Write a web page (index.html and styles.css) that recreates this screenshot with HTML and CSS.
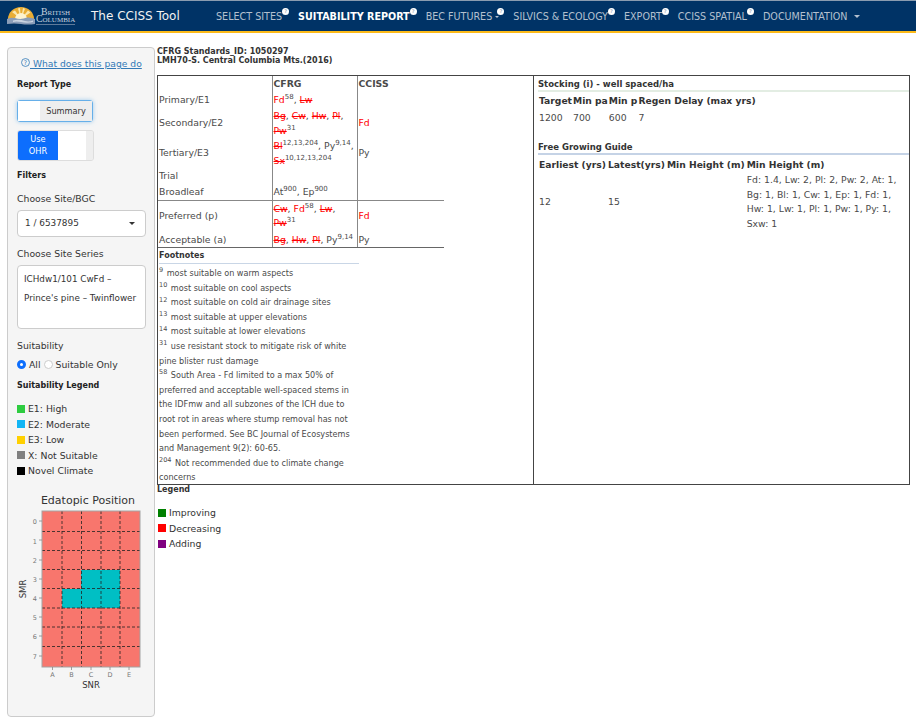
FILE: index.html
```html
<!DOCTYPE html>
<html lang="en">
<head>
    <meta charset="UTF-8">
    <meta name="viewport" content="width=device-width, initial-scale=1.0">
    <title>The CCISS Tool</title>
    <link rel="stylesheet" href="styles.css">
</head>
<body>
    <div class="navbar">
        <div class="brand">
            <svg class="logo-sun" width="28" height="18" viewBox="0 0 28 18">
                <path d="M1 12 A13 12 0 0 1 27 12 Z" fill="#e9ad35"/>
                <path d="M14 12 L5 5 L8 3.500 Z M14 12 L11 1.500 L13 1 Z M14 12 L16 1 L18 1.800 Z M14 12 L21 3.500 L23.500 5.500 Z" fill="#fbe7ac"/>
                <path d="M8 12 A6 6 0 0 1 20 12 Z" fill="#fdf3d0"/>
                <path d="M0 12 Q4 10 8 11 Q14 13 20 10.500 Q24 10 28 12 V17 Q21 18 14 17 T0 17 Z" fill="#8a9db8"/>
                <path d="M6 13.500 Q12 12 18 14 Q22 15 26 13.500 V15 Q20 16.500 14 15 Q9 14 6 15 Z" fill="#c9d3e0"/>
            </svg>
            <div class="logo-text"><span>British</span><span class="logo-col">Columbia</span></div>
        </div>
        <div class="app-title">The CCISS Tool</div>
        <ul class="nav-links">
            <li>SELECT SITES<i class="dot">?</i></li>
            <li class="active">SUITABILITY REPORT<i class="dot">?</i></li>
            <li class="has-small-caret">BEC FUTURES <b class="caret small"></b><i class="dot">?</i></li>
            <li>SILVICS &amp; ECOLOGY<i class="dot">?</i></li>
            <li>EXPORT<i class="dot">?</i></li>
            <li>CCISS SPATIAL<i class="dot">?</i></li>
            <li>DOCUMENTATION <b class="caret"></b></li>
        </ul>
    </div>

    <div class="page">
        <div class="sidebar">
            <a class="help-link" href="#"><svg width="9" height="9" viewBox="0 0 10 10"><circle cx="5" cy="5" r="4.400" fill="none" stroke="#337ab7" stroke-width="0.900"/><text x="5" y="7.500" text-anchor="middle" class="help-q">?</text></svg> What does this page do</a>
            <h5>Report Type</h5>
            <div class="toggle toggle-summary"><span class="toggle-blank"></span><span class="toggle-label">Summary</span></div>
            <div class="toggle toggle-ohr"><span class="toggle-on">Use OHR</span><span class="toggle-blank"></span><span class="toggle-end"></span></div>
            <h5 class="filters">Filters</h5>
            <label class="field-label">Choose Site/BGC</label>
            <div class="select-box">1 / 6537895<b class="caret dark"></b></div>
            <label class="field-label">Choose Site Series</label>
            <div class="series-box">ICHdw1/101 CwFd –<br>Prince's pine – Twinflower</div>
            <label class="field-label">Suitability</label>
            <div class="radios">
                <span class="radio checked"></span><span>All</span>
                <span class="radio"></span><span>Suitable Only</span>
            </div>
            <h5 class="legend-head">Suitability Legend</h5>
            <div class="legend-row"><span class="swatch" style="background:#2ecc40"></span>E1: High</div>
            <div class="legend-row"><span class="swatch" style="background:#12b5f5"></span>E2: Moderate</div>
            <div class="legend-row"><span class="swatch" style="background:#ffd000"></span>E3: Low</div>
            <div class="legend-row"><span class="swatch" style="background:#808080"></span>X: Not Suitable</div>
            <div class="legend-row"><span class="swatch" style="background:#000000"></span>Novel Climate</div>

            <svg class="edatopic" width="148" height="200" viewBox="1 0 148 200">
                <text x="81" y="11" class="plot-title" text-anchor="middle">Edatopic Position</text>
                <rect x="35" y="18" width="98" height="156" fill="#f8766d"/>
                <path d="M74 77 H113 V115 H55 V96 H74 Z" fill="#00bfc4"/>
                <path d="M55 18V174M74.500 18V174M94 18V174M113 18V174M35 38.500H133M35 57.500H133M35 76.500H133M35 95.500H133M35 115H133M35 134H133M35 153.500H133" stroke="#222" stroke-width="0.800" stroke-dasharray="3 2" fill="none"/>
                <rect x="35" y="18" width="98" height="156" fill="none" stroke="#a3a3a3" stroke-width="1"/>
                <path d="M32 28H35M32 47H35M32 67H35M32 86H35M32 105H35M32 124H35M32 143H35M32 163H35M45.500 174V177M64.500 174V177M84 174V177M103 174V177M122 174V177" stroke="#888" stroke-width="0.800"/>
                <g class="tick" text-anchor="end">
                    <text x="30" y="31">0</text><text x="30" y="51">1</text><text x="30" y="70">2</text><text x="30" y="89">3</text>
                    <text x="30" y="108">4</text><text x="30" y="127">5</text><text x="30" y="146">6</text><text x="30" y="166">7</text>
                </g>
                <g class="tick" text-anchor="middle">
                    <text x="45.500" y="184">A</text><text x="64.500" y="184">B</text><text x="84" y="184">C</text><text x="103" y="184">D</text><text x="122" y="184">E</text>
                </g>
                <text x="84" y="195" class="axis-name" text-anchor="middle">SNR</text>
                <text class="axis-name" text-anchor="middle" transform="translate(19 96) rotate(-90)">SMR</text>
            </svg>
        </div>

        <div class="main">
            <div class="report-title">CFRG Standards_ID: 1050297<br>LMH70-S. Central Columbia Mts.(2016)</div>
            <div class="report">
                <div class="report-left">
                    <table class="cfrg">
                        <tr class="row-head"><td></td><th>CFRG</th><th>CCISS</th></tr>
                        <tr class="row-primary"><td>Primary/E1</td><td><span class="red">Fd</span><sup>58</sup>, <s>Lw</s></td><td></td></tr>
                        <tr class="row-secondary"><td>Secondary/E2</td><td><s>Bg</s>, <s>Cw</s>, <s>Hw</s>, <s>Pl</s>, <s>Pw</s><sup>31</sup></td><td class="red">Fd</td></tr>
                        <tr class="row-tertiary"><td>Tertiary/E3</td><td><s>Bl</s><sup>12,13,204</sup>, Py<sup>9,14</sup>, <s>Sx</s><sup>10,12,13,204</sup></td><td>Py</td></tr>
                        <tr class="row-trial"><td>Trial</td><td></td><td></td></tr>
                        <tr class="row-broadleaf"><td>Broadleaf</td><td>At<sup>900</sup>, Ep<sup>900</sup></td><td></td></tr>
                        <tr class="row-preferred rule-top"><td>Preferred (p)</td><td><s>Cw</s>, <span class="red">Fd</span><sup>58</sup>, <s>Lw</s>, <s>Pw</s><sup>31</sup></td><td class="red">Fd</td></tr>
                        <tr class="row-accept rule-bottom"><td>Acceptable (a)</td><td class="nowrap"><s>Bg</s>, <s>Hw</s>, <s>Pl</s>, Py<sup>9,14</sup></td><td>Py</td></tr>
                    </table>
                    <div class="notes">
                        <h6 class="notes-head">Footnotes</h6>
                        <p><sup>9</sup> most suitable on warm aspects</p>
                        <p><sup>10</sup> most suitable on cool aspects</p>
                        <p><sup>12</sup> most suitable on cold air drainage sites</p>
                        <p><sup>13</sup> most suitable at upper elevations</p>
                        <p><sup>14</sup> most suitable at lower elevations</p>
                        <p><sup>31</sup> use resistant stock to mitigate risk of white pine blister rust damage</p>
                        <p><sup>58</sup> South Area - Fd limited to a max 50% of preferred and acceptable well-spaced stems in the IDFmw and all subzones of the ICH due to root rot in areas where stump removal has not been performed. See BC Journal of Ecosystems and Management 9(2): 60-65.</p>
                        <p><sup>204</sup> Not recommended due to climate change concerns</p>
                    </div>
                </div>
                <div class="report-right">
                    <h6 class="section-head green-rule">Stocking (i) - well spaced/ha</h6>
                    <table class="data stocking">
                        <tr><th>Target</th><th>Min pa</th><th>Min p</th><th>Regen Delay (max yrs)</th></tr>
                        <tr><td>1200</td><td>700</td><td>600</td><td>7</td></tr>
                    </table>
                    <h6 class="section-head blue-rule">Free Growing Guide</h6>
                    <table class="data growing">
                        <tr><th>Earliest (yrs)</th><th>Latest(yrs)</th><th>Min Height (m)</th><th>Min Height (m)</th></tr>
                        <tr><td>12</td><td>15</td><td></td><td class="heights">Fd: 1.4, Lw: 2, Pl: 2, Pw: 2, At: 1, Bg: 1, Bl: 1, Cw: 1, Ep: 1, Fd: 1, Hw: 1, Lw: 1, Pl: 1, Pw: 1, Py: 1, Sxw: 1</td></tr>
                    </table>
                </div>
            </div>
            <h6 class="legend-title">Legend</h6>
            <div class="change-legend">
                <div class="legend-row"><span class="swatch" style="background:#008000"></span>Improving</div>
                <div class="legend-row"><span class="swatch" style="background:#ff0000"></span>Decreasing</div>
                <div class="legend-row"><span class="swatch" style="background:#800080"></span>Adding</div>
            </div>
        </div>
    </div>
</body>
</html>
```

FILE: styles.css
```css
* {
    box-sizing: border-box;
}

body {
    font-family: "DejaVu Sans", Verdana, sans-serif;
    font-size: 9.300px;
    color: #4a4a4a;
    background-color: #ffffff;
    margin: 0;
    height: 720px;
    overflow: hidden;
}

.navbar {
    height: 33px;
    background-color: #003366;
    border-top: 1px solid #8a9cb0;
    border-bottom: 2px solid #fcba19;
    display: flex;
    align-items: center;
    color: #ffffff;
}

.brand {
    display: flex;
    align-items: center;
    width: 91px;
    padding-left: 7px;
    gap: 1px;
}

.logo-text {
    display: flex;
    flex-direction: column;
    align-items: center;
    font-family: "Liberation Serif", serif;
    font-size: 9.800px;
    line-height: 7.500px;
    font-variant: small-caps;
    color: #c8d2de;
    white-space: nowrap;
}

.logo-col {
    border-bottom: 1px solid #5f7a9a;
    padding-bottom: 1px;
}

.app-title {
    font-size: 12px;
    color: #f2f2f2;
    width: 125px;
}

.nav-links {
    list-style: none;
    margin: 0;
    padding: 0;
    display: flex;
    gap: 13px;
    font-size: 9.600px;
    color: #b4c0cf;
}

.nav-links li {
    position: relative;
    white-space: nowrap;
    padding-right: 3px;
}

.nav-links li.active {
    color: #ffffff;
    font-weight: bold;
}

.nav-links li.has-small-caret {
    padding-right: 1px;
}

.dot {
    position: absolute;
    top: -3px;
    right: -4px;
    width: 7px;
    height: 7px;
    border-radius: 50%;
    background-color: #ffffff;
    color: #a9b6c6;
    font-size: 5px;
    line-height: 7px;
    font-style: normal;
    font-weight: bold;
    text-align: center;
}

.caret {
    display: inline-block;
    width: 0;
    height: 0;
    margin-left: 3px;
    vertical-align: middle;
    border-top: 3px solid #b4c0cf;
    border-left: 3px solid transparent;
    border-right: 3px solid transparent;
}

.caret.small {
    margin-left: 0;
    border-top-width: 2px;
    border-left-width: 2px;
    border-right-width: 2px;
}

.caret.dark {
    border-top-color: #333;
}

.page {
    display: flex;
    align-items: flex-start;
    padding: 14px 7px 0;
    gap: 2px;
}

.sidebar {
    width: 148px;
    height: 670px;
    flex-shrink: 0;
    background-color: #f5f5f5;
    border: 1px solid #cccccc;
    border-radius: 4px;
    padding: 10px 0 0 9px;
    color: #333333;
}

.help-link {
    display: block;
    margin-left: 4px;
    color: #337ab7;
    font-size: 9.200px;
    text-decoration: underline;
    white-space: nowrap;
    line-height: 12px;
}

.help-q {
    font-size: 7px;
    fill: #337ab7;
}

h5 {
    margin: 10px 0 0;
    font-size: 8px;
    line-height: 10px;
    font-weight: bold;
    color: #222222;
}

.toggle {
    display: flex;
    border-radius: 3px;
    overflow: hidden;
    font-size: 8.200px;
}

.toggle-summary {
    width: 76px;
    height: 22px;
    margin-top: 10px;
    border: 1px solid #66afe9;
    box-shadow: 0 0 4px rgba(102, 175, 233, 0.6);
    overflow: visible;
}

.toggle-blank {
    width: 22px;
    background-color: #ffffff;
}

.toggle-label {
    flex: 1;
    background-color: #eeeeee;
    text-align: center;
    line-height: 20px;
}

.toggle-ohr {
    width: 77px;
    height: 31px;
    margin-top: 8px;
    border: 1px solid #dddddd;
}

.toggle-on {
    width: 40px;
    background-color: #0d6efd;
    color: #ffffff;
    text-align: center;
    padding: 3px 8px;
    line-height: 11.500px;
}

.toggle-ohr .toggle-blank {
    width: 28px;
}

.toggle-end {
    flex: 1;
    background-color: #eeeeee;
}

.filters {
    margin-top: 10px;
}

.field-label {
    display: block;
    line-height: 13px;
    margin-top: 11px;
}

.select-box {
    position: relative;
    width: 129px;
    height: 27px;
    margin-top: 5px;
    background-color: #ffffff;
    border: 1px solid #cccccc;
    border-radius: 4px;
    font-size: 8.900px;
    line-height: 25px;
    padding-left: 7px;
}

.select-box .caret {
    position: absolute;
    right: 10px;
    top: 11px;
}

.select-box + .field-label {
    margin-top: 10px;
}

.series-box {
    width: 129px;
    height: 64px;
    margin-top: 5px;
    background-color: #ffffff;
    border: 1px solid #cccccc;
    border-radius: 4px;
    font-size: 8.800px;
    line-height: 18.500px;
    padding: 4px 6px;
    white-space: nowrap;
    overflow: hidden;
}

.series-box + .field-label {
    margin-top: 10px;
}

.radios {
    display: flex;
    align-items: center;
    gap: 3px;
    margin-top: 6px;
    line-height: 13px;
}

.radio {
    width: 9px;
    height: 9px;
    border-radius: 50%;
    background-color: #ffffff;
    border: 1px solid #cccccc;
}

.radio.checked {
    border: 3px solid #0d6efd;
}

.legend-head {
    margin-top: 10px;
    margin-bottom: 10px;
}

.legend-row {
    display: flex;
    align-items: center;
    gap: 3px;
    height: 15.500px;
    color: #333333;
}

.swatch {
    width: 8px;
    height: 8px;
    flex-shrink: 0;
}

.edatopic {
    display: block;
    margin: 14px 0 0 -9px;
}

.plot-title {
    font-size: 11px;
    fill: #333333;
}

.tick text {
    font-size: 6.500px;
    fill: #777777;
}

.axis-name {
    font-size: 8.500px;
    fill: #333333;
}

.main {
    flex: 1;
    min-width: 0;
}

.report-title {
    margin-top: 1px;
    font-size: 8px;
    line-height: 8.500px;
    font-weight: bold;
    color: #333333;
}

.report {
    display: flex;
    width: 753px;
    height: 410px;
    margin-top: 10px;
    border: 1px solid #444444;
}

.report-left {
    width: 376px;
    border-right: 1px solid #444444;
}

table {
    border-collapse: collapse;
}

.cfrg {
    table-layout: fixed;
    width: 286px;
}

.cfrg td,
.cfrg th {
    padding: 0 0 0 1px;
    line-height: 14.500px;
    text-align: left;
    font-weight: normal;
}

.cfrg th {
    font-weight: bold;
    vertical-align: top;
    padding-top: 1px;
}

.cfrg td:first-child {
    width: 114px;
}

.cfrg td:nth-child(2),
.cfrg th:nth-child(2) {
    width: 85px;
    border-left: 1px solid #888888;
    border-right: 1px solid #888888;
}

.row-head {
    height: 16px;
}

.row-trial {
    height: 15px;
}

.row-primary {
    height: 17px;
}

.row-broadleaf {
    height: 16px;
}

.row-secondary {
    height: 29px;
}

.row-tertiary {
    height: 31px;
}

.row-preferred {
    height: 30px;
}

.row-accept {
    height: 17px;
}

.rule-top td {
    border-top: 1px solid #888888;
    padding-top: 1px;
}

.rule-bottom td {
    border-bottom: 1px solid #666666;
    padding-top: 2px;
}

.nowrap {
    white-space: nowrap;
}

s,
.red {
    color: #ff0000;
}

sup {
    font-size: 7px;
    line-height: 0;
    color: #4a4a4a;
}

.notes {
    width: 201px;
    padding-left: 1px;
}

h6 {
    margin: 0;
    font-size: 8px;
    font-weight: bold;
    color: #333333;
}

.notes-head {
    height: 16px;
    padding-top: 1px;
    line-height: 14px;
    border-bottom: 1px solid #c9d6e6;
    margin-bottom: 2px;
}

.notes p {
    margin: 0;
    font-size: 8.100px;
    line-height: 14.600px;
}

.notes sup {
    font-size: 6.500px;
    margin-right: 1px;
}

.report-right {
    flex: 1;
    padding: 0 0 0 4px;
}

.section-head {
    font-size: 8.500px;
    padding-top: 2px;
    line-height: 12px;
    border-bottom: 2px solid #e3ede3;
}

.blue-rule {
    margin-top: 13px;
    border-bottom-color: #c5d3e6;
}

.data td,
.data th {
    padding: 0 1px 0 0;
    line-height: 14.600px;
    text-align: left;
    white-space: nowrap;
}

.data td:first-child,
.data th:first-child {
    padding-left: 1px;
}

.data th {
    font-size: 9.200px;
    color: #333333;
}

.stocking {
    margin-top: 1px;
}

.stocking th {
    height: 16px;
}

.stocking td {
    height: 17px;
    padding-top: 1px;
}

.growing {
    margin-top: 2px;
}

.growing th {
    height: 16px;
    padding-right: 2px;
}

.data td.heights {
    width: 162px;
    white-space: normal;
}

.legend-title {
    line-height: 9px;
}

.change-legend {
    margin-top: 11px;
    padding-left: 1px;
}
```
